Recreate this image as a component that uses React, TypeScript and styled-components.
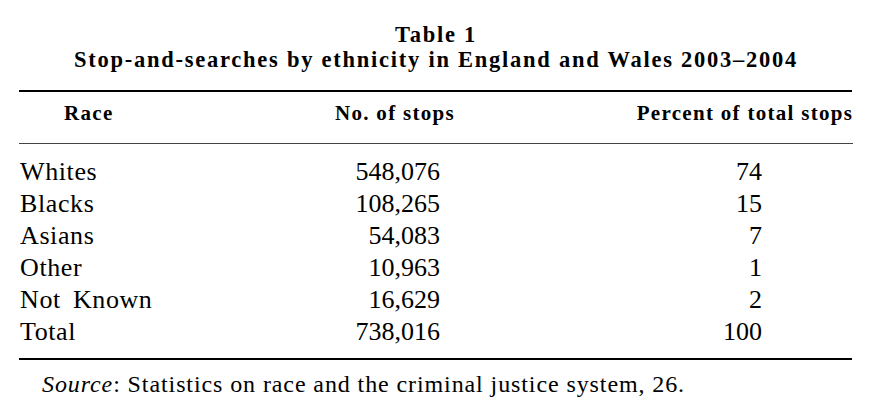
import React from "react";
import styled, { createGlobalStyle, css } from "styled-components";

const Global = createGlobalStyle`
  html, body { margin: 0; padding: 0; background: #fff; }
`;

const serif = css`
  font-family: "Liberation Serif", "Times New Roman", serif;
  color: #000;
`;

const Page = styled.div`
  ${serif};
  width: 874px;
  height: 418px;
  box-sizing: border-box;
  padding: 22px 22px 0 19px;
`;

const Title = styled.div`
  ${serif};
  text-align: center;
  font-weight: bold;
  font-size: 22.5px;
  line-height: 25px;
  letter-spacing: 1.75px;
  margin-left: 1px;
  white-space: nowrap;
`;

const Table = styled.div`
  ${serif};
  margin-top: 18px;
  display: grid;
  grid-template-columns: 281px 200px 352px;
  border-top: 2px solid #000;
  border-bottom: 2px solid #000;
`;

const HeadRow = styled.div`
  display: contents;
`;

const HeadCell = styled.div<{ $align: "left" | "right"; $pad: number }>`
  ${serif};
  font-weight: bold;
  font-size: 21px;
  line-height: 24px;
  letter-spacing: 1.3px;
  padding: 9px 0 18px;
  text-align: ${(p) => p.$align};
  padding-left: ${(p) => (p.$align === "left" ? p.$pad : 0)}px;
  padding-right: ${(p) => (p.$align === "right" ? p.$pad : 0)}px;
  margin-right: ${(p) => (p.$align === "right" ? -1.3 : 0)}px;
  border-bottom: 1.5px solid #444;
  white-space: nowrap;
`;

const Body = styled.div`
  display: contents;
`;

const Cell = styled.div<{ $align: "left" | "right"; $pad: number; $first?: boolean; $last?: boolean }>`
  ${serif};
  font-size: 26px;
  line-height: 32px;
  text-align: ${(p) => p.$align};
  letter-spacing: ${(p) => (p.$align === "left" ? 0.6 : 0)}px;
  word-spacing: 5px;
  padding-left: ${(p) => (p.$align === "left" ? p.$pad : 0)}px;
  padding-right: ${(p) => (p.$align === "right" ? p.$pad : 0)}px;
  padding-top: ${(p) => (p.$first ? 12 : 0)}px;
  padding-bottom: ${(p) => (p.$last ? 10 : 0)}px;
  white-space: nowrap;
`;

const Source = styled.div`
  ${serif};
  margin-top: 10px;
  padding-left: 23px;
  font-size: 24px;
  line-height: 28px;
  letter-spacing: 0.9px;
  white-space: nowrap;
`;

const Em = styled.em`
  ${serif};
  font-style: italic;
`;

const rows: [string, string, string][] = [
  ["Whites", "548,076", "74"],
  ["Blacks", "108,265", "15"],
  ["Asians", "54,083", "7"],
  ["Other", "10,963", "1"],
  ["Not Known", "16,629", "2"],
  ["Total", "738,016", "100"],
];

export default function App() {
  return (
    <>
      <Global />
      <Page>
        <Title>
          Table 1
          <br />
          Stop-and-searches by ethnicity in England and Wales 2003–2004
        </Title>
        <Table>
          <HeadRow>
            <HeadCell $align="left" $pad={45}>Race</HeadCell>
            <HeadCell $align="left" $pad={35}>No. of stops</HeadCell>
            <HeadCell $align="right" $pad={0}>Percent of total stops</HeadCell>
          </HeadRow>
          <Body>
            {rows.map((r, i) => {
              const first = i === 0;
              const last = i === rows.length - 1;
              return (
                <React.Fragment key={r[0]}>
                  <Cell $align="left" $pad={1} $first={first} $last={last}>{r[0]}</Cell>
                  <Cell $align="right" $pad={60} $first={first} $last={last}>{r[1]}</Cell>
                  <Cell $align="right" $pad={90} $first={first} $last={last}>{r[2]}</Cell>
                </React.Fragment>
              );
            })}
          </Body>
        </Table>
        <Source>
          <Em>Source</Em>: Statistics on race and the criminal justice system, 26.
        </Source>
      </Page>
    </>
  );
}
